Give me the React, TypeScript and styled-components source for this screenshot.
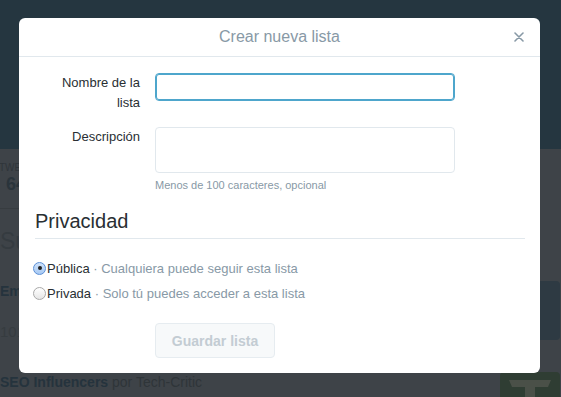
import * as React from 'react';
import styled, { createGlobalStyle } from 'styled-components';

const GlobalStyle = createGlobalStyle`
  html, body {
    margin: 0;
    padding: 0;
    width: 561px;
    height: 397px;
    overflow: hidden;
    background: #3e4348;
    font-family: "Liberation Sans", Arial, sans-serif;
  }
`;

const Page = styled.div`
  position: relative;
  width: 561px;
  height: 397px;
  overflow: hidden;
  background: #3e4348;
`;

const TopBand = styled.div`
  height: 149px;
  background: #253640;
`;

const Backdrop = styled.div`
  display: flex;
  justify-content: space-between;
`;

const Stream = styled.div`
  flex: 1;
  color: #2c3237;
`;

const StatBlock = styled.div`
  padding: 13px 0 14px 0;
  border-bottom: 1px solid #373c40;
`;

const StatLabel = styled.div`
  font-size: 10px;
  line-height: 12px;
  text-transform: uppercase;
  color: #2f353a;
  margin-left: -1px;
`;

const StatValue = styled.div`
  font-size: 18px;
  line-height: 20px;
  font-weight: bold;
  color: #2a343b;
  padding-left: 6px;
`;

const SectionTitle = styled.div`
  font-size: 23px;
  line-height: 28px;
  padding: 18px 0 0 0;
  color: #353b40;
`;

const ListName = styled.div<{ $top: number }>`
  padding-top: ${(p) => p.$top}px;
  font-size: 14px;
  line-height: 20px;
  font-weight: bold;
  color: #25333d;

  span {
    font-weight: normal;
    color: #2f3539;
  }
`;

const ListMeta = styled.div`
  padding-top: 22px;
  font-size: 15px;
  color: #363c40;
`;

const Thumbs = styled.div`
  width: 61px;
  display: flex;
  flex-direction: column;
  align-items: flex-end;
`;

const Thumb = styled.div<{ $top: number; $h: number; $bg: string }>`
  margin-top: ${(p) => p.$top}px;
  width: 60px;
  margin-right: 1px;
  height: ${(p) => p.$h}px;
  border-radius: 4px;
  background: ${(p) => p.$bg};
  display: flex;
  justify-content: center;
  padding-top: 6px;
  box-sizing: border-box;
`;

const Modal = styled.div`
  position: absolute;
  left: 19px;
  top: 18px;
  width: 521px;
  height: 355px;
  background: #fff;
  border-radius: 6px;
  box-sizing: border-box;
`;

const ModalHeader = styled.div`
  position: relative;
  height: 38px;
  border-bottom: 1px solid #e1e8ed;
  display: flex;
  align-items: center;
  justify-content: center;
`;

const ModalTitle = styled.h3`
  margin: 0;
  font-size: 16px;
  font-weight: normal;
  color: #8899a6;
`;

const CloseButton = styled.button`
  position: absolute;
  right: 12px;
  top: 10px;
  width: 18px;
  height: 18px;
  padding: 0;
  border: none;
  background: none;
  display: flex;
  align-items: center;
  justify-content: center;
`;

const ModalBody = styled.div`
  padding: 12px 15px 15px 14px;
`;

const FormRow = styled.div<{ $mb: number }>`
  display: flex;
  align-items: flex-start;
  margin-bottom: ${(p) => p.$mb}px;
`;

const FieldLabel = styled.label`
  box-sizing: border-box;
  width: 107px;
  padding: 4px 0 0 22px;
  text-align: right;
  font-size: 13px;
  line-height: 20px;
  color: #292f33;
`;

const FieldCol = styled.div`
  margin-left: 15px;
  width: 300px;
`;

const TextInput = styled.div<{ $h: number; $focus?: boolean }>`
  margin-top: 4px;
  height: ${(p) => p.$h}px;
  box-sizing: border-box;
  border-radius: 4px;
  border: 1px solid ${(p) => (p.$focus ? '#4ea6cc' : '#e1e8ed')};
  box-shadow: ${(p) => (p.$focus ? 'inset 0 0 0 1px #4ea6cc' : 'none')};
`;

const HelpText = styled.div`
  margin-top: 4px;
  font-size: 11px;
  line-height: 16px;
  color: #8899a6;
`;

const PrivacyTitle = styled.h2`
  margin: 0 0 0 2px;
  padding-bottom: 5px;
  border-bottom: 1px solid #e1e8ed;
  font-size: 20px;
  line-height: 24px;
  font-weight: normal;
  color: #292f33;
`;

const RadioList = styled.div`
  margin-top: 20px;
  display: flex;
  flex-direction: column;
  gap: 7px;
`;

const RadioRow = styled.div`
  display: flex;
  align-items: center;
  height: 18px;
  font-size: 13px;
  color: #292f33;

  span {
    color: #8899a6;
  }
`;

const RadioDot = styled.div<{ $checked?: boolean }>`
  width: 13px;
  height: 13px;
  box-sizing: border-box;
  border-radius: 50%;
  margin-right: 1px;
  display: flex;
  align-items: center;
  justify-content: center;
  border: 1px solid ${(p) => (p.$checked ? '#5b8fd6' : '#a9a9a9')};
  background: ${(p) =>
    p.$checked
      ? 'linear-gradient(#cfe2fa, #a7c9f3)'
      : 'linear-gradient(#ffffff, #e6e6e6)'};

  &::after {
    content: '';
    display: ${(p) => (p.$checked ? 'block' : 'none')};
    width: 4px;
    height: 4px;
    border-radius: 50%;
    background: #222;
  }
`;

const Actions = styled.div`
  margin-top: 21px;
  padding-left: 122px;
`;

const SaveButton = styled.button`
  width: 120px;
  height: 35px;
  border: 1px solid #e6ecf0;
  border-radius: 4px;
  background: #f7f9fa;
  font-family: "Liberation Sans", Arial, sans-serif;
  font-size: 14px;
  font-weight: bold;
  color: #c3ccd3;
`;

export default function App() {
  return (
    <Page>
      <GlobalStyle />
      <TopBand />
      <Backdrop>
        <Stream>
          <StatBlock>
            <StatLabel>Twe</StatLabel>
            <StatValue>64</StatValue>
          </StatBlock>
          <SectionTitle>Su</SectionTitle>
          <ListName $top={26}>Em</ListName>
          <ListMeta>101</ListMeta>
          <ListName $top={32}>
            SEO Influencers <span>por Tech-Critic</span>
          </ListName>
        </Stream>
        <Thumbs>
          <Thumb $top={132} $h={59} $bg="#2e3a43" />
          <Thumb $top={32} $h={30} $bg="#2f3d33">
            <svg width="46" height="24" viewBox="0 0 46 24">
              <path d="M2 2 H44 L41 9 H28 V24 H18 V9 H5 Z" fill="#4a5048" />
            </svg>
          </Thumb>
        </Thumbs>
      </Backdrop>

      <Modal>
        <ModalHeader>
          <ModalTitle>Crear nueva lista</ModalTitle>
          <CloseButton aria-label="Cerrar">
            <svg width="10" height="10" viewBox="0 0 10 10">
              <path d="M1 1 L9 9 M9 1 L1 9" stroke="#8899a6" strokeWidth="1.6" strokeLinecap="round" />
            </svg>
          </CloseButton>
        </ModalHeader>
        <ModalBody>
          <FormRow $mb={10}>
            <FieldLabel>Nombre de la lista</FieldLabel>
            <FieldCol>
              <TextInput $h={28} $focus />
            </FieldCol>
          </FormRow>
          <FormRow $mb={16}>
            <FieldLabel>Descripción</FieldLabel>
            <FieldCol>
              <TextInput $h={46} />
              <HelpText>Menos de 100 caracteres, opcional</HelpText>
            </FieldCol>
          </FormRow>
          <PrivacyTitle>Privacidad</PrivacyTitle>
          <RadioList>
            <RadioRow>
              <RadioDot $checked />
              Pública<span>&nbsp;· Cualquiera puede seguir esta lista</span>
            </RadioRow>
            <RadioRow>
              <RadioDot />
              Privada<span>&nbsp;· Solo tú puedes acceder a esta lista</span>
            </RadioRow>
          </RadioList>
          <Actions>
            <SaveButton>Guardar lista</SaveButton>
          </Actions>
        </ModalBody>
      </Modal>
    </Page>
  );
}
